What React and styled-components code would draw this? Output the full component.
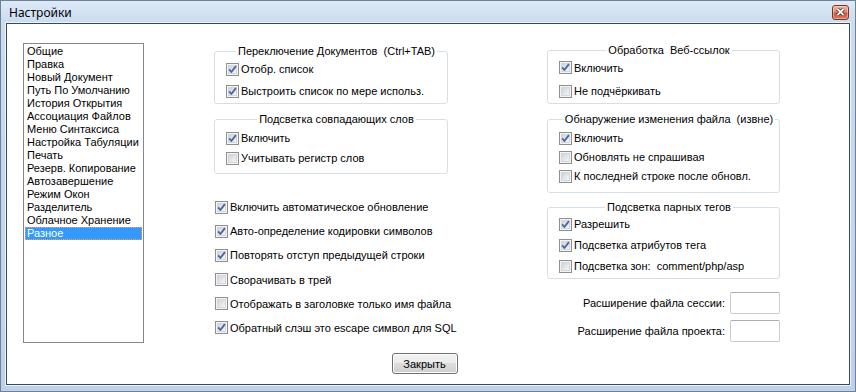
import styled, { createGlobalStyle } from 'styled-components';

const GlobalStyle = createGlobalStyle`
  html, body {
    margin: 0;
    padding: 0;
    background: #fff;
  }
  body {
    font-family: "Liberation Sans", Arial, sans-serif;
    font-size: 11px;
    color: #000;
  }
  * {
    box-sizing: border-box;
  }
`;

const Window = styled.div`
  width: 856px;
  height: 392px;
  border: 1px solid #6f8196;
  background: linear-gradient(to bottom, #dde9f6 0, #c9dcf0 22px, #bcd2ea 100%);
  display: flex;
  flex-direction: column;
`;

const TitleBar = styled.div`
  height: 22px;
  display: flex;
  align-items: center;
  justify-content: space-between;
  padding: 0 6px 0 8px;

  span {
    font-family: "Noto Sans", "Liberation Sans", sans-serif;
    font-size: 12px;
    color: #000;
  }
`;

const CloseButton = styled.div`
  width: 17px;
  height: 15px;
  border: 1px solid #7a3324;
  border-radius: 3px;
  background: linear-gradient(to bottom, #eeb4a4 0%, #e08a72 45%, #cf5636 55%, #dd7a5e 100%);
  box-shadow: inset 0 0 0 1px rgba(255, 255, 255, 0.35);
  display: flex;
  align-items: center;
  justify-content: center;
`;

const Client = styled.div`
  flex: 1;
  margin: 0 5px 6px;
  background: #fff;
  border: 1px solid #3b4758;
  box-shadow: 0 0 0 1px #eef4fb;
  padding: 19px 0 0 16px;
  display: flex;
  flex-direction: column;
`;

const MainRow = styled.div`
  display: flex;
  align-items: flex-start;
`;

const ListBox = styled.div`
  width: 121px;
  height: 300px;
  border: 1px solid #828790;
  padding: 1px;
`;

const ListItem = styled.div`
  height: 13px;
  line-height: 11px;
  padding-left: 1px;
  border: 1px ${p => (p.$selected ? 'dotted #f0a050' : 'solid transparent')};
  background: ${p => (p.$selected ? '#3399ff' : 'transparent')};
  color: ${p => (p.$selected ? '#fff' : '#000')};
  white-space: nowrap;
`;

const Column = styled.div`
  width: ${p => p.$width}px;
  margin-left: ${p => p.$left}px;
  margin-top: ${p => p.$top}px;
  display: flex;
  flex-direction: column;
`;

const Group = styled.fieldset`
  margin: ${p => p.$mt || 0}px 0 0;
  padding: ${p => p.$pt}px 0 ${p => p.$pb}px 11px;
  border: 1px solid #d5dfe5;
  border-radius: 3px;
  min-width: 0;
  display: flex;
  flex-direction: column;
  gap: ${p => p.$gap}px;

  legend {
    margin: 0 auto;
    padding: 0 2px;
    height: 13px;
    line-height: 13px;
    white-space: pre;
  }
`;

const Stack = styled.div`
  margin-top: ${p => p.$mt}px;
  padding-left: 1px;
  display: flex;
  flex-direction: column;
  gap: ${p => p.$gap}px;
`;

const Row = styled.label`
  height: 19px;
  display: flex;
  align-items: center;
  gap: 2px;
  white-space: pre;

  svg {
    flex: none;
  }
`;

const FieldRow = styled.div`
  height: 22px;
  display: flex;
  align-items: center;
  justify-content: flex-end;
  gap: 5px;
`;

const TextBox = styled.div`
  width: 50px;
  height: 22px;
  border: 1px solid #c9cdd3;
  border-top-color: #abadb3;
  border-radius: 2px;
  background: #fff;
`;

const ButtonRow = styled.div`
  display: flex;
  justify-content: center;
  margin-top: 10px;
  padding-right: 23px;
`;

const Button = styled.div`
  width: 66px;
  height: 21px;
  border: 1px solid #707070;
  border-radius: 3px;
  background: linear-gradient(to bottom, #f2f2f2 0%, #ebebeb 50%, #dddddd 50%, #cfcfcf 100%);
  box-shadow: inset 0 0 0 1px #fcfcfc;
  display: flex;
  align-items: center;
  justify-content: center;
`;

const CheckBox = ({ checked }) => (
  <svg width="13" height="13" viewBox="0 0 13 13">
    <defs>
      <linearGradient id="cbfill" x1="0" y1="0" x2="1" y2="1">
        <stop offset="0" stopColor="#cdd1d8" />
        <stop offset="1" stopColor="#f8f8f8" />
      </linearGradient>
    </defs>
    <rect x="0.5" y="0.5" width="12" height="12" fill="#f4f4f4" stroke="#8e8f8f" />
    <rect x="2.5" y="2.5" width="8" height="8" fill="url(#cbfill)" stroke="#d3d6db" />
    {checked && (
      <path d="M3.2 6.4 L5.4 9 L9.9 3.1" fill="none" stroke="#4b64a6" strokeWidth="1.8" strokeLinejoin="round" />
    )}
  </svg>
);

const Check = ({ checked, children }) => (
  <Row>
    <CheckBox checked={checked} />
    {children}
  </Row>
);

const pages = [
  'Общие',
  'Правка',
  'Новый Документ',
  'Путь По Умолчанию',
  'История Открытия',
  'Ассоциация Файлов',
  'Меню Синтаксиса',
  'Настройка Табуляции',
  'Печать',
  'Резерв. Копирование',
  'Автозавершение',
  'Режим Окон',
  'Разделитель',
  'Облачное Хранение',
  'Разное',
];

const App = () => {
  return (
    <>
      <GlobalStyle />
      <Window>
        <TitleBar>
          <span>Настройки</span>
          <CloseButton>
            <svg width="9" height="8" viewBox="0 0 9 8">
              <path d="M1.5 1 L7.5 7 M7.5 1 L1.5 7" stroke="#5a2418" strokeWidth="3.4" />
              <path d="M1.5 1 L7.5 7 M7.5 1 L1.5 7" stroke="#fff" strokeWidth="1.8" />
            </svg>
          </CloseButton>
        </TitleBar>

        <Client>
          <MainRow>
            <ListBox>
              {pages.map(p => (
                <ListItem key={p} $selected={p === 'Разное'}>{p}</ListItem>
              ))}
            </ListBox>

            <Column $width={234} $left={70} $top={1.5}>
              <Group $pt={2} $gap={3} $pb={2}>
                <legend>Переключение Документов  (Ctrl+TAB)</legend>
                <Check checked>Отобр. список</Check>
                <Check checked>Выстроить список по мере использ.</Check>
              </Group>

              <Group $mt={9} $pt={3} $gap={1} $pb={5.5}>
                <legend>Подсветка совпадающих слов</legend>
                <Check checked>Включить</Check>
                <Check>Учитывать регистр слов</Check>
              </Group>

              <Stack $mt={23.5} $gap={5.2}>
                <Check checked>Включить автоматическое обновление</Check>
                <Check checked>Авто-определение кодировки символов</Check>
                <Check checked>Повторять отступ предыдущей строки</Check>
                <Check>Сворачивать в трей</Check>
                <Check>Отображать в заголовке только имя файла</Check>
                <Check checked>Обратный слэш это escape символ для SQL</Check>
              </Stack>
            </Column>

            <Column $width={233} $left={99} $top={0.5}>
              <Group $pt={1.5} $gap={4.5} $pb={2.5}>
                <legend>Обработка  Веб-ссылок</legend>
                <Check checked>Включить</Check>
                <Check>Не подчёркивать</Check>
              </Group>

              <Group $mt={8.5} $pt={3} $gap={0} $pb={6.5}>
                <legend>Обнаружение изменения файла  (извне)</legend>
                <Check checked>Включить</Check>
                <Check>Обновлять не спрашивая</Check>
                <Check>К последней строке после обновл.</Check>
              </Group>

              <Group $mt={7.5} $pt={1} $gap={2} $pb={2.5}>
                <legend>Подсветка парных тегов</legend>
                <Check checked>Разрешить</Check>
                <Check checked>Подсветка атрибутов тега</Check>
                <Check>Подсветка зон:  comment/php/asp</Check>
              </Group>

              <Stack $mt={13} $gap={6}>
                <FieldRow>
                  Расширение файла сессии:
                  <TextBox />
                </FieldRow>
                <FieldRow>
                  Расширение файла проекта:
                  <TextBox />
                </FieldRow>
              </Stack>
            </Column>
          </MainRow>

          <ButtonRow>
            <Button>Закрыть</Button>
          </ButtonRow>
        </Client>
      </Window>
    </>
  );
};

export default App;
